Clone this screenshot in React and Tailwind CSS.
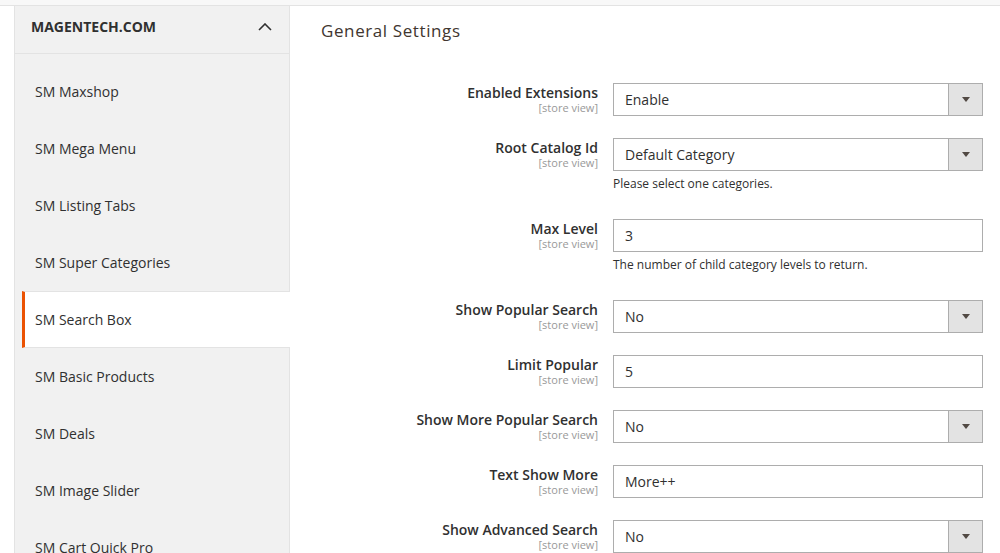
import React from "react";

const font = { fontFamily: '"Open Sans", "Noto Sans", sans-serif' };

const navItems = [
  "SM Maxshop",
  "SM Mega Menu",
  "SM Listing Tabs",
  "SM Super Categories",
  "SM Search Box",
  "SM Basic Products",
  "SM Deals",
  "SM Image Slider",
  "SM Cart Quick Pro",
];

const rows = [
  { label: "Enabled Extensions", type: "select", value: "Enable" },
  { label: "Root Catalog Id", type: "select", value: "Default Category", note: "Please select one categories." },
  { label: "Max Level", type: "input", value: "3", note: "The number of child category levels to return." },
  { label: "Show Popular Search", type: "select", value: "No" },
  { label: "Limit Popular", type: "input", value: "5" },
  { label: "Show More Popular Search", type: "select", value: "No" },
  { label: "Text Show More", type: "input", value: "More++" },
  { label: "Show Advanced Search", type: "select", value: "No" },
];

function Field({ type, value }) {
  return (
    <div className="flex h-[33px] w-[370px] border border-[#adadad] bg-white">
      <div className="flex flex-1 items-center pl-[11px] text-[14px] text-[#303030]">{value}</div>
      {type === "select" && (
        <div className="flex w-[34px] items-center justify-center border-l border-[#adadad] bg-[#e3e3e3]">
          <svg width="8" height="5" viewBox="0 0 8 5">
            <path d="M0 0 H8 L4 5 Z" fill="#514943" />
          </svg>
        </div>
      )}
    </div>
  );
}

export default function App() {
  return (
    <div className="h-[553px] w-[1000px] overflow-hidden bg-white" style={font}>
      <div className="h-[6px] border-b border-[#e3e3e3] bg-[#f8f8f8]" />
      <div className="flex">
        <aside className="ml-[14px] w-[276px] shrink-0 border-x border-[#e3e3e3] bg-[#f1f1f1]">
          <div className="flex items-center justify-between border-b border-[#e3e3e3] pb-[16px] pl-[16px] pr-[17px] pt-[11px]">
            <span className="text-[14px] font-bold uppercase leading-[20px] text-[#303030]">magentech.com</span>
            <svg width="14" height="8" viewBox="0 0 14 8">
              <path d="M1 7 L7 1 L13 7" fill="none" stroke="#303030" strokeWidth="1.6" />
            </svg>
          </div>
          <div className="pt-[9px]">
            {navItems.map((item) =>
              item === "SM Search Box" ? (
                <div
                  key={item}
                  className="-mr-px ml-[7px] border-y border-l-[3px] border-[#e3e3e3] border-l-[#eb5202] bg-white py-[18px] pl-[10px] text-[14px] leading-[19px] text-[#303030]"
                >
                  {item}
                </div>
              ) : (
                <div
                  key={item}
                  className="ml-[7px] border-l-[3px] border-transparent py-[19px] pl-[10px] text-[14px] leading-[19px] text-[#303030]"
                >
                  {item}
                </div>
              )
            )}
          </div>
        </aside>
        <main className="flex-1">
          <h2 className="pl-[31px] pt-[13px] text-[17px] font-medium leading-[24px] tracking-[0.6px] text-[#41362f]">General Settings</h2>
          <div className="mt-[40px] flex flex-col gap-[22px]">
            {rows.map((r) => (
              <div key={r.label} className="flex">
                <div className="w-[308px] text-right">
                  <div className="text-[14px] font-semibold leading-[19px] text-[#303030]">{r.label}</div>
                  <div className="text-[11px] leading-[11px] text-[#999999]">[store view]</div>
                </div>
                <div className="ml-[15px]">
                  <Field type={r.type} value={r.value} />
                  {r.note && (
                    <div className="h-[26px] pt-[4px] text-[12px] leading-[18px] text-[#303030]">{r.note}</div>
                  )}
                </div>
              </div>
            ))}
          </div>
        </main>
      </div>
    </div>
  );
}
